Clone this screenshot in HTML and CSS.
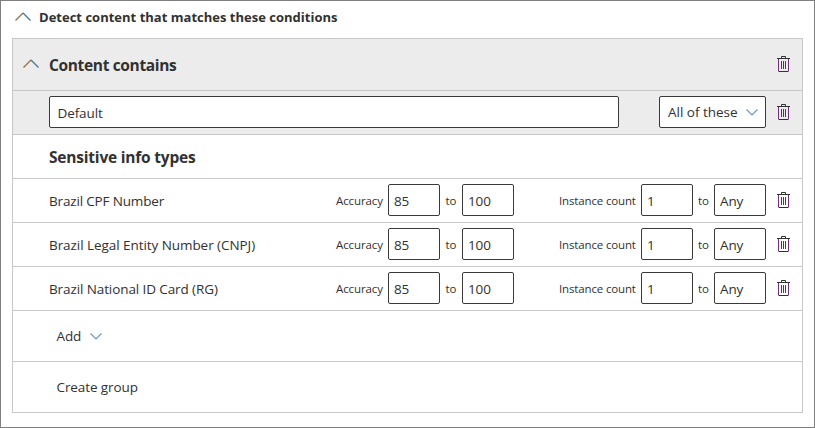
FILE: index.html
```html
<!DOCTYPE html>
<html lang="en">
<head>
<meta charset="utf-8">
<title>Conditions</title>
<link rel="stylesheet" href="styles.css">
</head>
<body>
<svg class="defs" width="0" height="0">
  <symbol id="trash" viewBox="0 0 13 17">
    <path class="lid" d="M4.5 2V.5h4V2M0 2.5h13M1.5 15.5h10"/>
    <path class="can" d="M1.5 3v12M11.5 3v12"/>
    <path class="ribs" d="M4.5 5v8M6.5 5v8M8.5 5v8"/>
  </symbol>
</svg>
<main class="frame">
  <header class="title">
    <svg class="up" viewBox="0 0 16 9"><path class="a" d="M.5 8.5 8 1"/><path class="b" d="M8 1l7.500 7.500"/></svg>
    <h1>Detect content that matches these conditions</h1>
  </header>
  <section class="card">
    <div class="row head shade">
      <svg class="up" viewBox="0 0 16 9"><path class="a" d="M.5 8.500 8 1"/><path class="b" d="M8 1l7.500 7.500"/></svg>
      <h2 class="contains">Content contains</h2>
      <svg class="trash"><use href="#trash"/></svg>
    </div>
    <div class="row group shade">
      <div class="box name"><span class="default">Default</span></div>
      <div class="box select"><span class="all">All of these</span><svg class="down" viewBox="0 0 12 7"><path d="M.5.500 6 6 11.500.500"/></svg></div>
      <svg class="trash"><use href="#trash"/></svg>
    </div>
    <div class="row"><h2 class="types">Sensitive info types</h2></div>
    <div class="row item">
      <span class="label cpf">Brazil CPF Number</span>
      <span class="small acc">Accuracy</span><div class="box num">85</div><span class="small to">to</span><div class="box num">100</div>
      <span class="small inst">Instance count</span><div class="box num">1</div><span class="small to last">to</span><div class="box num any">Any</div>
      <svg class="trash"><use href="#trash"/></svg>
    </div>
    <div class="row item">
      <span class="label cnpj">Brazil Legal Entity Number (CNPJ)</span>
      <span class="small acc">Accuracy</span><div class="box num">85</div><span class="small to">to</span><div class="box num">100</div>
      <span class="small inst">Instance count</span><div class="box num">1</div><span class="small to last">to</span><div class="box num any">Any</div>
      <svg class="trash"><use href="#trash"/></svg>
    </div>
    <div class="row item">
      <span class="label rg">Brazil National ID Card (RG)</span>
      <span class="small acc">Accuracy</span><div class="box num">85</div><span class="small to">to</span><div class="box num">100</div>
      <span class="small inst">Instance count</span><div class="box num">1</div><span class="small to last">to</span><div class="box num any">Any</div>
      <svg class="trash"><use href="#trash"/></svg>
    </div>
    <div class="row action"><span class="add">Add</span><svg class="down" viewBox="0 0 12 7"><path d="M.5.500 6 6 11.500.500"/></svg></div>
    <div class="row action"><span class="create">Create group</span></div>
  </section>
</main>
</body>
</html>
```
FILE: styles.css
```css
* { box-sizing: border-box; }
body { margin: 0; background: #fff; color: #323130; font: 13.5px/20px "Open Sans", "Noto Sans", sans-serif; letter-spacing: -.1px; white-space: nowrap; }
h1, h2 { margin: 0; font-weight: 700; line-height: 20px; }
h1 { font-size: 13px; letter-spacing: .01px; margin-left: 8px; }
h2 { font-size: 15.5px; letter-spacing: -.2px; }
svg { display: block; flex: none; fill: none; }
.defs { position: absolute; }
.frame { width: 815px; height: 428px; border: 1px solid #7f7f7f; padding: 0 11px; }
.title { height: 37px; padding: 6px 0 0 3px; display: flex; align-items: flex-start; }
.title .up { margin-top: 5px; }
.up { width: 16px; height: 9px; stroke-width: 1.3px; }
.up .a { stroke: #92704c; }
.up .b { stroke: #3c7698; }
.card { width: 791px; height: 375px; border: 1px solid #c8c8c8; }
.row { display: flex; align-items: center; height: 44px; padding: 0 12px 0 36px; border-bottom: 1px solid #c8c8c8; }
.row:last-child { border-bottom: 0; }
.shade { background: #ececec; }
.head { height: 52px; padding-left: 10px; }
.head .up { margin-top: -3px; }
.contains { margin-left: 10px; letter-spacing: -.35px; }
.box { height: 32px; border: 1px solid #3b3a39; border-radius: 2px; background: #fff; display: flex; align-items: center; flex: none; margin-top: -1px; }
.name { width: 570px; padding: 2px 8px 0 7.5px; }
.select { width: 107px; margin-left: 40px; padding-left: 8px; }
.all { width: 78px; letter-spacing: -.02px; }
.down { width: 12px; height: 7px; stroke: #6e9bbb; stroke-width: 1.2px; }
.trash { width: 13px; height: 17px; margin-left: auto; margin-top: -1px; stroke: #323130; }
.can { stroke: #74307c; }
.ribs { stroke: #4c3a50; }
.label { width: 287px; }
.cpf { letter-spacing: -.16px; }
.cnpj { letter-spacing: -.06px; }
.num { width: 52px; padding: 2px 0 0 5px; }
.small { font-size: 11.5px; letter-spacing: -.1px; flex: none; }
.acc { width: 52px; }
.to { width: 22px; text-align: center; }
.inst { width: 82px; margin-left: 45px; letter-spacing: -.15px; }
.last { width: 21px; }
.action { height: 51px; padding-left: 43.5px; }
.add { width: 33.5px; }
.create { margin-top: -2px; }
```
